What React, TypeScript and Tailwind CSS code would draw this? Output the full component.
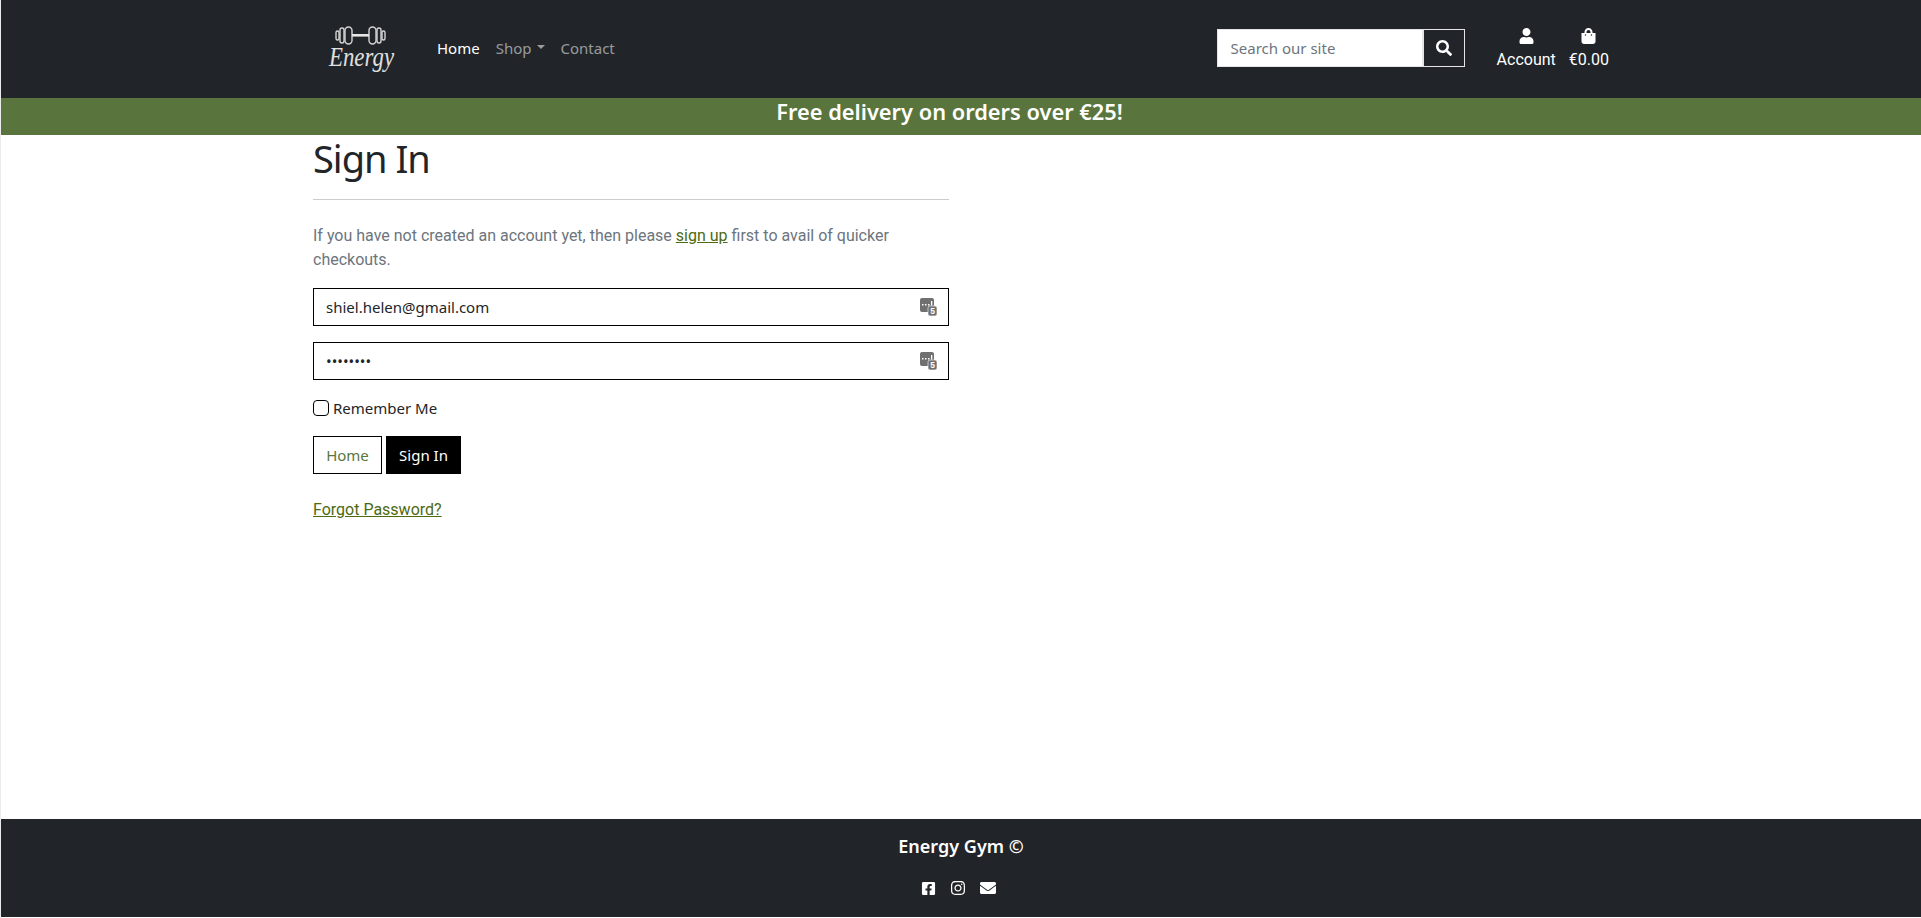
import React from "react";
import { FaUser, FaShoppingBag, FaSearch, FaFacebookSquare, FaInstagram, FaEnvelope } from "react-icons/fa";

const headingFont = "font-['Noto_Sans',sans-serif]";
const bodyFont = "font-['Roboto',sans-serif]";

function Logo() {
  return (
    <svg width="68" height="48" viewBox="0 0 68 48" className="block overflow-visible">
      <g fill="none" stroke="#d4d4d4" strokeWidth="1.4">
        <rect x="8" y="6" width="3" height="9" rx="1.5" />
        <rect x="12" y="3" width="4" height="15" rx="2" />
        <rect x="17" y="2" width="7" height="17" rx="3.5" />
        <rect x="41" y="2" width="7" height="17" rx="3.5" />
        <rect x="49" y="3" width="4" height="15" rx="2" />
        <rect x="54" y="6" width="3" height="9" rx="1.5" />
      </g>
      <rect x="24" y="9" width="17" height="2.6" fill="#e6e6e6" />
      <text
        x="1"
        y="41"
        textLength="65"
        lengthAdjust="spacingAndGlyphs"
        fill="#e0e0e0"
        fontSize="27"
        fontStyle="italic"
        fontFamily="'Liberation Serif', serif"
      >
        Energy
      </text>
    </svg>
  );
}

function KeyBadge() {
  return (
    <svg width="17" height="18" viewBox="0 0 17 18" className="absolute right-[12px] top-[10px]">
      <rect x="0" y="0" width="14" height="14" rx="2" fill="#707070" />
      <rect x="2" y="6" width="1.5" height="1.5" fill="#fff" />
      <rect x="5" y="6" width="1.5" height="1.5" fill="#fff" />
      <rect x="8" y="6" width="1.5" height="1.5" fill="#fff" />
      <rect x="11" y="3" width="1.3" height="4.5" fill="#fff" />
      <rect x="8" y="8" width="9" height="10" rx="2" fill="#707070" stroke="#fff" strokeWidth="0.6" />
      <text x="12.5" y="16.4" textAnchor="middle" fontSize="8.5" fontWeight="700" fill="#fff" fontFamily="'Liberation Sans', sans-serif">
        5
      </text>
    </svg>
  );
}

function FormInput({ type, value }: { type: string; value: string }) {
  return (
    <div className="relative h-[38px]">
      <input
        type={type}
        defaultValue={value}
        readOnly
        className={`h-full w-full border border-black bg-white px-3 text-[15px] text-[#212529] outline-none ${headingFont}`}
      />
      <KeyBadge />
    </div>
  );
}

export default function App() {
  return (
    <div className="flex h-[918px] flex-col border-l border-[#ececec] bg-white pb-px">
      <header className="h-[98px] bg-[#212529]">
        <div className="mx-auto flex h-full w-[1320px] items-start px-3">
          <div className="mt-[25px] ml-[15px]">
            <Logo />
          </div>
          <nav className={`mt-[36px] ml-[41px] flex gap-4 text-[15px] leading-6 text-[#ffffff8c] ${headingFont}`}>
            <span className="text-white">Home</span>
            <span className="flex items-center">
              Shop
              <span className="ml-[5px] mb-[3px] border-x-[4.8px] border-t-[4.8px] border-x-transparent border-t-[#ffffff8c]" />
            </span>
            <span>Contact</span>
          </nav>
          <div className="mt-[29px] ml-auto flex h-[38px] w-[248px]">
            <div className={`flex h-full w-[206px] items-center border border-[#e5e5e5] bg-white pl-[13px] text-[15px] text-[#6c757d] ${headingFont}`}>
              Search our site
            </div>
            <div className="flex h-full w-[42px] items-center justify-center border border-[#e5e5e5] text-white">
              <FaSearch size={16} />
            </div>
          </div>
          <div className={`mt-[28px] ml-[32px] flex gap-[13px] text-[16px] leading-[20px] text-white ${bodyFont}`}>
            <div className="flex flex-col items-center">
              <FaUser size={15} className="mb-[6px] h-[16px]" />
              <span>Account</span>
            </div>
            <div className="flex flex-col items-center">
              <FaShoppingBag size={15} className="mb-[6px] h-[16px]" />
              <span>€0.00</span>
            </div>
          </div>
        </div>
      </header>

      <div className={`flex h-[37px] justify-center bg-[#59753d] pr-[23px] text-[21.8px] font-semibold leading-[27px] text-white ${headingFont}`}>
        Free delivery on orders over €25!
      </div>

      <main className="flex-1">
        <div className="mx-auto w-[1320px] px-3">
          <div className="w-[636px]">
            <h1 className={`-mt-px h-[65px] text-[38px] leading-[48px] tracking-[-1px] text-[#212529] ${headingFont}`}>Sign In</h1>
            <hr className="border-t border-[#cccccc]" />
            <p className={`mt-[24px] text-[16px] leading-6 text-[#6c757d] ${bodyFont}`}>
              If you have not created an account yet, then please{" "}
              <a className="text-[#4d6a12] underline">sign up</a> first to avail of quicker checkouts.
            </p>
            <div className="mt-[16px] flex flex-col gap-4">
              <FormInput type="email" value="shiel.helen@gmail.com" />
              <FormInput type="password" value="password" />
            </div>
            <label className={`mt-[16px] flex h-[24px] items-center gap-[4px] text-[15px] text-[#212529] ${headingFont}`}>
              <span className="h-[16px] w-[16px] rounded-[4px] border border-black bg-white" />
              Remember Me
            </label>
            <div className={`mt-[16px] flex gap-1 text-[15px] ${headingFont}`}>
              <a className="flex h-[38px] w-[69px] items-center justify-center border border-black text-[#5a753d]">Home</a>
              <a className="flex h-[38px] w-[75px] items-center justify-center bg-black text-white">Sign In</a>
            </div>
            <a className={`mt-[24px] block text-[16px] leading-6 text-[#4d6a12] underline ${bodyFont}`}>Forgot Password?</a>
          </div>
        </div>
      </main>

      <footer className="flex h-[98px] flex-col items-center bg-[#212529] text-white">
        <p className={`mt-[13px] text-[18px] font-semibold leading-7 ${headingFont}`}>Energy Gym ©</p>
        <div className="mt-[20px] mr-[6px] flex items-center gap-[14px]">
          <FaFacebookSquare size={15} />
          <FaInstagram size={16} />
          <FaEnvelope size={16} />
        </div>
      </footer>
    </div>
  );
}
